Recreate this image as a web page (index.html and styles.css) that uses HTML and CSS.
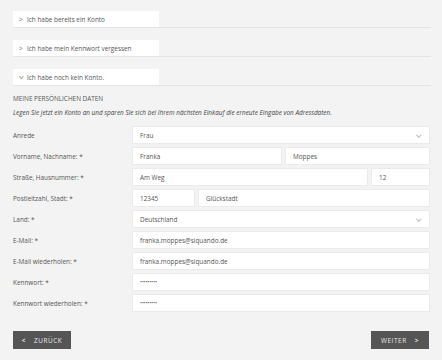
FILE: index.html
```html
<!DOCTYPE html>
<html lang="de">
<head>
<meta charset="utf-8">
<link rel="stylesheet" href="styles.css">
</head>
<body>
<div class="page">
  <div class="acc">
    <div class="acc-item"><div class="acc-head"><span class="chev">&gt;</span>Ich habe bereits ein Konto</div></div>
    <div class="acc-item"><div class="acc-head"><span class="chev">&gt;</span>Ich habe mein Kennwort vergessen</div></div>
    <div class="acc-item"><div class="acc-head"><span class="chev down">&gt;</span>Ich habe noch kein Konto.</div></div>
  </div>
  <h2 class="title">MEINE PERSÖNLICHEN DATEN</h2>
  <p class="intro">Legen Sie jetzt ein Konto an und sparen Sie sich bei Ihrem nächsten Einkauf die erneute Eingabe von Adressdaten.</p>
  <div class="form">
    <div class="row"><div class="label">Anrede</div><div class="fields"><div class="input select">Frau<span class="arrow"></span></div></div></div>
    <div class="row"><div class="label">Vorname, Nachname: *</div><div class="fields"><div class="input half">Franka</div><div class="input grow">Moppes</div></div></div>
    <div class="row"><div class="label">Straße, Hausnummer: *</div><div class="fields"><div class="input street">Am Weg</div><div class="input grow">12</div></div></div>
    <div class="row"><div class="label">Postleitzahl, Stadt: *</div><div class="fields"><div class="input zip">12345</div><div class="input grow">Glückstadt</div></div></div>
    <div class="row"><div class="label">Land: *</div><div class="fields"><div class="input select">Deutschland<span class="arrow"></span></div></div></div>
    <div class="row"><div class="label">E-Mail: *</div><div class="fields"><div class="input">franka.moppes@siquando.de</div></div></div>
    <div class="row"><div class="label">E-Mail wiederholen: *</div><div class="fields"><div class="input">franka.moppes@siquando.de</div></div></div>
    <div class="row"><div class="label">Kennwort: *</div><div class="fields"><div class="input pw">•••••••••</div></div></div>
    <div class="row"><div class="label">Kennwort wiederholen: *</div><div class="fields"><div class="input pw">•••••••••</div></div></div>
  </div>
  <div class="buttons">
    <div class="btn"><span class="bchev">&lt;</span>ZURÜCK</div>
    <div class="btn">WEITER<span class="bchev right">&gt;</span></div>
  </div>
</div>
</body>
</html>
```
FILE: styles.css
```css
html, body {
  margin: 0;
  padding: 0;
  background: #f3f3f3;
}
body {
  font-family: "Open Sans", "Liberation Sans", sans-serif;
  color: #555;
  font-size: 6.4px;
}
.page {
  padding: 11px 13px 0 13px;
}
.acc-item {
  border-bottom: 1px solid #e4e4e4;
  margin-bottom: 12px;
  margin-right: -2px;
}
.acc-head {
  width: 146px;
  height: 16px;
  background: #fff;
  display: flex;
  align-items: center;
  box-sizing: border-box;
  padding-left: 6px;
  color: #555;
}
.chev {
  display: inline-block;
  width: 8px;
  color: #666;
  font-size: 6.4px;
}
.chev.down {
  transform: rotate(90deg) scaleY(1.3);
  width: 5px;
  margin-right: 3px;
  text-align: center;
}
.title {
  font-size: 6.4px;
  font-weight: normal;
  margin: -3px 0 0 0;
  height: 14px;
  line-height: 8px;
  color: #555;
}
.intro {
  font-style: italic;
  margin: 0;
  height: 18px;
  line-height: 8px;
  color: #444;
}
.form {
  display: flex;
  flex-direction: column;
  gap: 5px;
}
.row {
  display: flex;
  align-items: center;
  height: 16px;
}
.label {
  width: 120px;
  flex: none;
  color: #555;
}
.fields {
  flex: 1;
  display: flex;
  gap: 5px;
}
.input {
  flex: 1;
  height: 16px;
  background: #fff;
  box-shadow: 0 0 0 0.5px #e4e4e4;
  display: flex;
  align-items: center;
  padding-left: 7px;
  box-sizing: border-box;
  position: relative;
  color: #555;
}
.input.half { flex: none; width: 148px; }
.input.street { flex: none; width: 234px; }
.input.zip { flex: none; width: 61px; }
.input.grow { flex: 1; }
.input.pw { font-size: 5px; letter-spacing: 0; }
.arrow {
  position: absolute;
  right: 9px;
  top: 5.5px;
  width: 2.5px;
  height: 2.5px;
  border-right: 0.7px solid #bbb;
  border-bottom: 0.7px solid #bbb;
  transform: rotate(45deg);
}
.buttons {
  display: flex;
  justify-content: space-between;
  margin-top: 20px;
}
.btn {
  background: #555;
  color: #e8e8e8;
  height: 18px;
  width: 58px;
  display: flex;
  align-items: center;
  justify-content: center;
  letter-spacing: 0.6px;
  font-size: 6.4px;
  box-sizing: border-box;
}
.bchev {
  margin-right: 8px;
  font-weight: bold;
}
.bchev.right {
  margin-right: 0;
  margin-left: 8px;
}
```
